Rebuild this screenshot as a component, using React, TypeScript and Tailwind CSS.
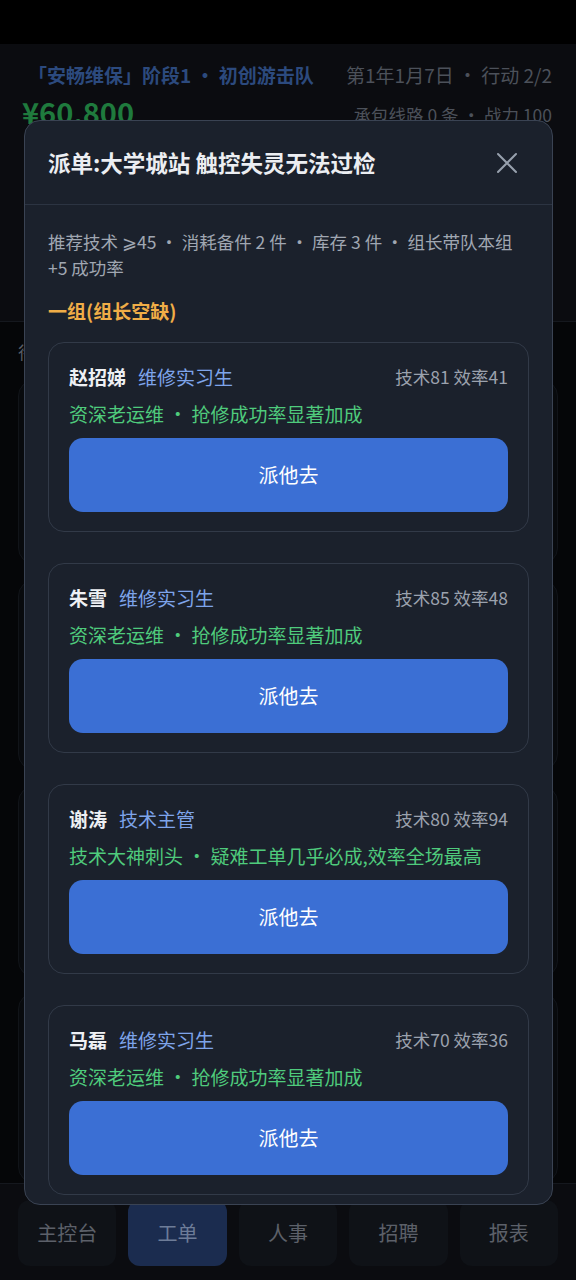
import React from "react";

const font = { fontFamily: '"Noto Sans CJK SC", "Noto Sans", sans-serif' };

type P = { name: string; role: string; stat: string; trait: string };

const people: P[] = [
  { name: "赵招娣", role: "维修实习生", stat: "技术81 效率41", trait: "资深老运维 · 抢修成功率显著加成" },
  { name: "朱雪", role: "维修实习生", stat: "技术85 效率48", trait: "资深老运维 · 抢修成功率显著加成" },
  { name: "谢涛", role: "技术主管", stat: "技术80 效率94", trait: "技术大神刺头 · 疑难工单几乎必成,效率全场最高" },
  { name: "马磊", role: "维修实习生", stat: "技术70 效率36", trait: "资深老运维 · 抢修成功率显著加成" },
];

function Card({ p }: { p: P }) {
  return (
    <div className="rounded-2xl border border-[#323a48] bg-[#1b212c] px-5 pt-[22px] pb-[19px]">
      <div className="flex items-center h-6">
        <span className="text-[19px] font-bold text-[#eef0f4] leading-6">{p.name}</span>
        <span className="ml-3 text-[19px] text-[#7ea4ea] leading-6">{p.role}</span>
        <span className="ml-auto text-[17.5px] text-[#9ba2ae] leading-6">{p.stat}</span>
      </div>
      <div className="mt-[13px] text-[19px] leading-6 text-[#4fcb7c] whitespace-nowrap">{p.trait}</div>
      <button className="mt-3 w-full h-[74px] rounded-[14px] bg-[#3b6fd4] text-white text-[20px] flex items-center justify-center">
        派他去
      </button>
    </div>
  );
}

export default function App() {
  return (
    <div className="relative w-[576px] h-[1280px] overflow-hidden bg-black" style={font}>
      {/* background page */}
      <div className="h-[44px] bg-black" />
      <div className="h-[278px] bg-[#0b0c10] border-b border-[#15181e] px-[30px] pt-[19px]">
        <div className="flex items-center justify-between h-6">
          <span className="text-[19px] font-bold text-[#2c4a7e] -ml-[2px]">「安畅维保」阶段1 · 初创游击队</span>
          <span className="text-[19px] text-[#4c515a] -mr-[6px]">第1年1月7日 · 行动 2/2</span>
        </div>
        <div className="flex items-center justify-between mt-[6px]">
          <span className="text-[29px] font-bold text-[#1f7a3d] leading-9 -ml-[8px]">¥60,800</span>
          <span className="text-[17.5px] text-[#4c515a] -mr-[6px] mt-2">承包线路 0 条 · 战力 100</span>
        </div>
      </div>
      <div className="h-[861px] bg-[#050608] px-[18px] pt-[18px] flex flex-col gap-[16px]">
        <div className="text-[17px] text-[#5a5f68] leading-6 h-6">待派工单</div>
        <div className="h-[218px] rounded-2xl border border-[#111419] bg-[#080a0d]" />
        <div className="h-[226px] rounded-2xl border border-[#111419] bg-[#080a0d]" />
        <div className="h-[226px] rounded-2xl border border-[#111419] bg-[#080a0d]" />
        <div className="h-[226px] rounded-2xl border border-[#111419] bg-[#080a0d]" />
      </div>
      <div className="h-[97px] bg-[#0b0c10] border-t border-[#15181e] px-[18px] pt-[16px]">
        <div className="grid grid-cols-5 gap-3">
          {["主控台", "工单", "人事", "招聘", "报表"].map((t, i) => (
            <div
              key={t}
              className={
                "h-[66px] rounded-xl flex items-center justify-center text-[20px] " +
                (i === 1 ? "bg-[#1b2c4f] text-[#6d7c98]" : "bg-[#0f1217] text-[#5c6069]")
              }
            >
              {t}
            </div>
          ))}
        </div>
      </div>

      {/* modal */}
      <div className="absolute left-[24px] top-[120px] w-[529px] h-[1085px] rounded-2xl border border-[#3a4353] bg-[#1b212c] overflow-hidden flex flex-col">
        <div className="h-[84px] shrink-0 flex items-center justify-between pl-[23px] pr-[34px] border-b border-[#2c3442]">
          <span className="text-[22.5px] font-bold text-[#eceef2]">派单:大学城站 触控失灵无法过检</span>
          <svg width="22" height="22" viewBox="0 0 22 22" fill="none" stroke="#97a0ad" strokeWidth="2" strokeLinecap="round">
            <path d="M2 2L20 20M20 2L2 20" />
          </svg>
        </div>
        <div className="px-[23px] pt-[24px]">
          <div className="text-[17.5px] leading-[26px] text-[#a0a7b2]">
            推荐技术 ⩾45 · 消耗备件 2 件 · 库存 3 件 · 组长带队本组 <span className="whitespace-nowrap">+5 成功率</span>
          </div>
          <div className="mt-[18px] text-[19px] font-bold leading-6 text-[#f0ad47]">一组(组长空缺)</div>
          <div className="mt-[19px] flex flex-col gap-[31px]">
            {people.map((p) => (
              <Card key={p.name} p={p} />
            ))}
          </div>
        </div>
      </div>
    </div>
  );
}
